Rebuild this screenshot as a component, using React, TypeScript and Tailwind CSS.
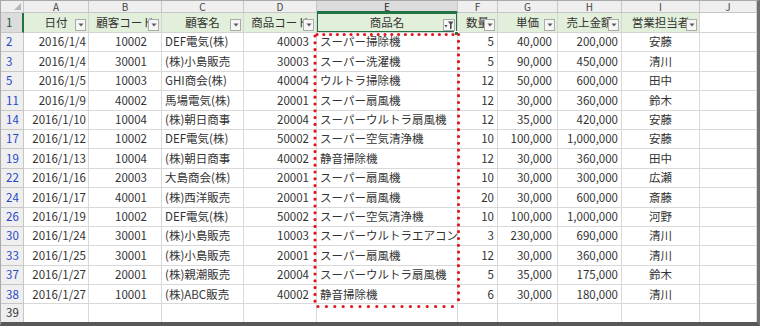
import React from "react";

type Row = [string, string, string, string, string, string, string, string, string, string];

const data: Row[] = [
  ["2", "2016/1/4", "10002", "DEF電気(株)", "40003", "スーパー掃除機", "5", "40,000", "200,000", "安藤"],
  ["3", "2016/1/4", "30001", "(株)小島販売", "30003", "スーパー洗濯機", "5", "90,000", "450,000", "清川"],
  ["5", "2016/1/5", "10003", "GHI商会(株)", "40004", "ウルトラ掃除機", "12", "50,000", "600,000", "田中"],
  ["11", "2016/1/9", "40002", "馬場電気(株)", "20001", "スーパー扇風機", "12", "30,000", "360,000", "鈴木"],
  ["14", "2016/1/10", "10004", "(株)朝日商事", "20004", "スーパーウルトラ扇風機", "12", "35,000", "420,000", "安藤"],
  ["17", "2016/1/12", "10002", "DEF電気(株)", "50002", "スーパー空気清浄機", "10", "100,000", "1,000,000", "安藤"],
  ["19", "2016/1/13", "10004", "(株)朝日商事", "40002", "静音掃除機", "12", "30,000", "360,000", "田中"],
  ["22", "2016/1/16", "20003", "大島商会(株)", "20001", "スーパー扇風機", "10", "30,000", "300,000", "広瀬"],
  ["24", "2016/1/17", "40001", "(株)西洋販売", "20001", "スーパー扇風機", "20", "30,000", "600,000", "斎藤"],
  ["26", "2016/1/19", "10002", "DEF電気(株)", "50002", "スーパー空気清浄機", "10", "100,000", "1,000,000", "河野"],
  ["30", "2016/1/24", "30001", "(株)小島販売", "10003", "スーパーウルトラエアコン", "3", "230,000", "690,000", "清川"],
  ["33", "2016/1/25", "30001", "(株)小島販売", "20001", "スーパー扇風機", "12", "30,000", "360,000", "清川"],
  ["37", "2016/1/27", "20001", "(株)親潮販売", "20004", "スーパーウルトラ扇風機", "5", "35,000", "175,000", "鈴木"],
  ["38", "2016/1/27", "10001", "(株)ABC販売", "40002", "静音掃除機", "6", "30,000", "180,000", "清川"],
];

const align = [
  "justify-end pr-[2px]",
  "justify-center pl-[12px]",
  "justify-start pl-[3px]",
  "justify-end pr-[7px]",
  "justify-start pl-[3px]",
  "justify-end pr-[3px]",
  "justify-end pr-[5px]",
  "justify-end pr-[3px]",
  "justify-center",
];

const letters = ["A", "B", "C", "D", "E", "F", "G", "H", "I", "J"];
const headers = ["日付", "顧客コード", "顧客名", "商品コード", "商品名", "数量", "単価", "売上金額", "営業担当者"];

function FilterBtn() {
  return (
    <div className="absolute right-[2px] top-[6px] w-[11px] h-[12px] border border-[#ababab] bg-[#f6f6f6] flex items-center justify-center">
      <svg width="6" height="4" viewBox="0 0 6 4">
        <path d="M0.5 0.5 L5.5 0.5 L3 3.5 Z" fill="#5a5a5a" />
      </svg>
    </div>
  );
}

function FilterOnBtn() {
  return (
    <div className="absolute right-[2px] top-[6px] w-[12px] h-[12px] border border-[#ababab] bg-[#f6f6f6] flex items-center justify-center">
      <svg width="10" height="10" viewBox="0 0 10 10">
        <path d="M0.5 5 L3.5 5 L2 7.5 Z" fill="#4a4a4a" />
        <path d="M4 1.5 H9.5 L7.6 4.2 V8.5 L6 9.3 V4.2 Z" fill="#4a4a4a" />
      </svg>
    </div>
  );
}

export default function App() {
  const font = { fontFamily: '"Noto Sans CJK JP", "Noto Sans", sans-serif' };
  return (
    <div
      className="relative w-[760px] h-[326px] bg-white overflow-hidden border-t border-l border-t-[#a9a9a9] border-l-[#a9a9a9] border-r-[3px] border-r-[#707070] border-b-[4px] border-b-[#585858]"
      style={font}
    >
      <div className="grid h-full grid-cols-[23px_65px_73px_82px_73px_141px_40px_60px_64px_78px_1fr] grid-rows-[12px_20px_repeat(14,19.4px)_1fr] text-[11.5px] leading-none text-[#333]">
        {/* column letters row */}
        <div className="relative bg-[#efefef] border-r border-b border-[#c6c6c6]">
          <svg className="absolute right-[2px] bottom-[2px]" width="7" height="7" viewBox="0 0 7 7">
            <path d="M7 0 L7 7 L0 7 Z" fill="#b7b7b7" />
          </svg>
        </div>
        {letters.map((l) =>
          l === "E" ? (
            <div
              key={l}
              className="flex items-center justify-center bg-[#dcdcdc] border-r border-b border-[#c6c6c6] border-b-[#217346] shadow-[inset_0_-1px_0_#217346] text-[10px] text-[#2a2a2a]"
            >
              {l}
            </div>
          ) : (
            <div
              key={l}
              className="flex items-center justify-center bg-[#efefef] border-r border-b border-[#c6c6c6] text-[10px] text-[#444]"
            >
              {l}
            </div>
          )
        )}

        {/* header row 1 */}
        <div className="flex items-center pl-[5px] bg-[#dcdcdc] border-b border-[#c6c6c6] border-r-2 border-r-[#217346] text-[11.5px] text-[#1e5a36]">
          1
        </div>
        {headers.map((h, i) => (
          <div
            key={h}
            className="relative flex items-center justify-center overflow-hidden whitespace-nowrap bg-[#e2efda] border-r border-b border-[#d4d4d4]"
          >
            <span className="pt-[1px]">{h}</span>
            {i === 4 ? <FilterOnBtn /> : <FilterBtn />}
            {i === 4 && (
              <div className="absolute -left-[1px] -top-[1px] -right-[1px] -bottom-[1px] border-2 border-[#217346]" />
            )}
          </div>
        ))}
        <div className="border-r border-b border-[#d4d4d4]" />

        {/* data rows */}
        {data.map((r) => (
          <React.Fragment key={r[0]}>
            <div className="flex items-center pl-[5px] bg-[#efefef] border-r border-b border-[#c6c6c6] text-[11.5px] text-[#2a47c8]">
              {r[0]}
            </div>
            {r.slice(1).map((v, i) => (
              <div
                key={i}
                className={`flex items-center overflow-hidden whitespace-nowrap border-r border-b border-[#d9d9d9] ${align[i]}`}
              >
                {v}
              </div>
            ))}
            <div className="border-r border-b border-[#d9d9d9]" />
          </React.Fragment>
        ))}

        {/* row 39 */}
        <div className="flex items-center pl-[5px] bg-[#efefef] border-r border-[#c6c6c6] text-[11.5px] text-[#333]">
          39
        </div>
        {letters.map((l) => (
          <div key={l} className="border-r border-[#d9d9d9]" />
        ))}
      </div>

      {/* fill handle */}
      <div className="absolute left-[453px] top-[30px] w-[5px] h-[5px] bg-[#217346] border border-white" />

      {/* marching ants */}
      <svg className="absolute left-0 top-0 pointer-events-none" width="760" height="326">
        <g stroke="#e3141c" strokeWidth="3.2" strokeLinecap="round" fill="none">
          <path d="M316 33.5 H457.5" strokeDasharray="0 6.8" />
          <path d="M314 35 V305.5" strokeDasharray="0 6.8" />
          <path d="M457.5 33.5 V305.5" strokeDasharray="0 6.8" />
          <path d="M317 305.5 H457.5" strokeDasharray="0 8.4" />
        </g>
      </svg>
    </div>
  );
}
